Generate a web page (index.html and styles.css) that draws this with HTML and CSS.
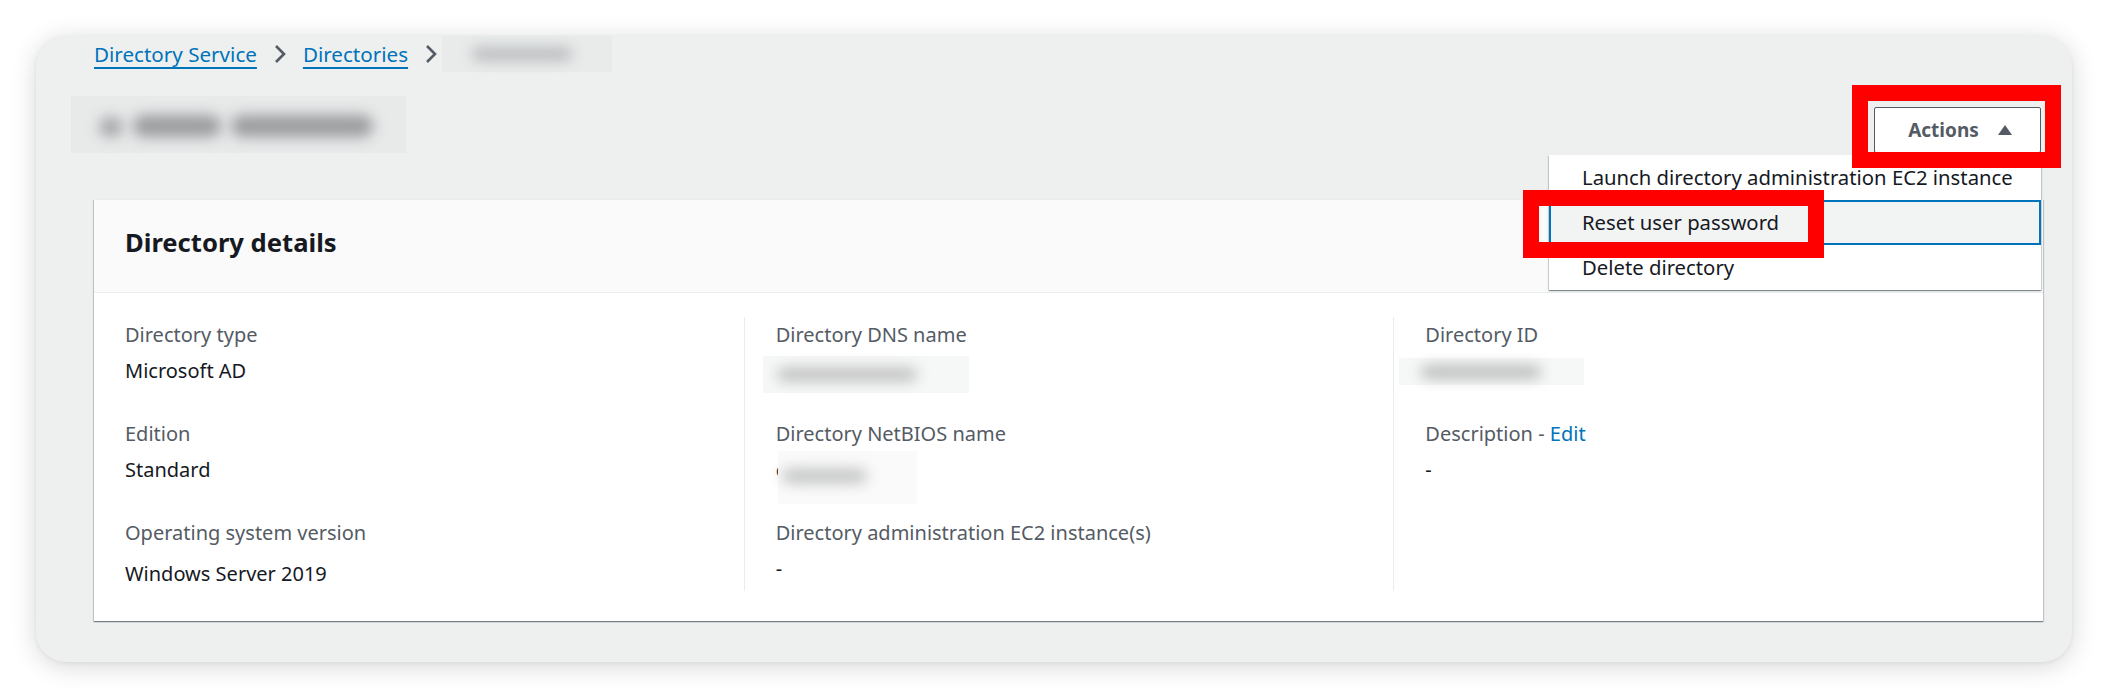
FILE: index.html
```html
<!DOCTYPE html>
<html lang="en">
<head>
<meta charset="utf-8">
<title>Directory details</title>
<link rel="stylesheet" href="styles.css">
</head>
<body>
<div class="panel">
  <nav class="breadcrumb">
    <a class="crumb-link" href="#">Directory Service</a>
    <svg class="chev" width="14" height="22" viewBox="0 0 14 22"><polyline points="3,3 11,11 3,19" fill="none" stroke="#545b64" stroke-width="2.6" stroke-linejoin="miter"/></svg>
    <a class="crumb-link" href="#">Directories</a>
    <svg class="chev" width="14" height="22" viewBox="0 0 14 22"><polyline points="3,3 11,11 3,19" fill="none" stroke="#545b64" stroke-width="2.6" stroke-linejoin="miter"/></svg>
    <span class="blur blur-crumb"><span class="ink ink-crumb"></span></span>
  </nav>

  <div class="page-head">
    <span class="blur blur-title"><span class="ink ink-title-a"></span><span class="ink ink-title-b"></span><span class="ink ink-title-c"></span></span>
    <div class="actions">
      <button class="btn" type="button">Actions <svg class="caret" width="16" height="12" viewBox="0 0 16 12"><polygon points="8,1 15,11 1,11" fill="#545b64"/></svg></button>
      <span class="annot annot-actions"></span>
      <ul class="menu">
        <li class="menu-item">Launch directory administration EC2 instance</li>
        <li class="menu-item is-hl">Reset user password<span class="annot annot-reset"></span></li>
        <li class="menu-item">Delete directory</li>
      </ul>
    </div>
  </div>

  <section class="card">
    <header class="card-head"><h2 class="card-title">Directory details</h2></header>
    <div class="card-body">
      <div class="col">
        <div class="kv"><div class="label">Directory type</div><div class="value">Microsoft AD</div></div>
        <div class="kv"><div class="label">Edition</div><div class="value">Standard</div></div>
        <div class="kv"><div class="label">Operating system version</div><div class="value value-os">Windows Server 2019</div></div>
      </div>
      <div class="col col-sep">
        <div class="kv"><div class="label">Directory DNS name</div><div class="value"><span class="blur blur-dns"><span class="ink ink-dns"></span></span></div></div>
        <div class="kv"><div class="label">Directory NetBIOS name</div><div class="value value-netbios">c<span class="blur blur-nb"><span class="ink ink-nb"></span></span></div></div>
        <div class="kv"><div class="label">Directory administration EC2 instance(s)</div><div class="value">-</div></div>
      </div>
      <div class="col col-sep">
        <div class="kv"><div class="label">Directory ID</div><div class="value"><span class="blur blur-id"><span class="ink ink-id"></span></span></div></div>
        <div class="kv"><div class="label">Description - <a class="edit" href="#">Edit</a></div><div class="value">-</div></div>
      </div>
    </div>
  </section>
</div>
</body>
</html>
```

FILE: styles.css
```css
* { box-sizing: border-box; }

html, body {
  margin: 0;
  padding: 0;
  background: #ffffff;
}

body {
  font-family: "Noto Sans", "Liberation Sans", sans-serif;
  color: #16191f;
  font-size: 20px;
  width: 2110px;
  height: 698px;
  overflow: hidden;
}

.panel {
  margin: 36px 0 0 36px;
  width: 2036px;
  height: 626px;
  background: #eef0ef;
  border-radius: 30px;
  box-shadow: 0 4px 26px rgba(0, 0, 0, 0.16), 0 1px 4px rgba(0, 0, 0, 0.06);
  padding: 3px 29px 0 58px;
}

/* breadcrumb */
.breadcrumb {
  display: flex;
  align-items: center;
  height: 30px;
  line-height: 30px;
  font-size: 20.6px;
}

.crumb-link {
  color: #0073bb;
  text-decoration: underline;
  text-underline-offset: 5px;
  text-decoration-thickness: 2px;
}

.chev {
  margin: 0 16px 0 16px;
  display: block;
}

.blur {
  display: inline-block;
  position: relative;
  vertical-align: middle;
}

.ink {
  position: absolute;
  background: #9a9c9e;
  border-radius: 10px;
  filter: blur(7px);
}

.blur-crumb {
  width: 170px;
  height: 36px;
  background: #e9ebeb;
  margin-left: -12px;
}
.ink-crumb { left: 30px; top: 12px; width: 100px; height: 12px; background: #b4b6b7; }

/* page header */
.page-head {
  display: flex;
  justify-content: space-between;
  align-items: flex-end;
  margin-top: 26px;
  height: 58px;
}

.blur-title {
  width: 335px;
  height: 57px;
  background: #e8eaea;
  margin-left: -23px;
}
.ink-title-a { left: 28px; top: 21px; width: 24px; height: 20px; background: #a3a5a7; }
.ink-title-b { left: 62px; top: 19px; width: 88px; height: 22px; background: #9a9c9e; }
.ink-title-c { left: 160px; top: 19px; width: 142px; height: 22px; background: #9a9c9e; }

.actions {
  position: relative;
  margin-right: 2px;
}

.btn {
  display: flex;
  align-items: center;
  gap: 18px;
  width: 167px;
  height: 46px;
  justify-content: center;
  background: #ffffff;
  border: 1.5px solid #545b64;
  border-radius: 2px;
  font-family: inherit;
  font-size: 19px;
  font-weight: 700;
  color: #545b64;
  padding: 0 0 0 6px;
}

.caret { display: block; }

.annot {
  position: absolute;
  border: 16px solid #ff0000;
  pointer-events: none;
  z-index: 5;
}

.annot-actions {
  left: -22px;
  top: -22px;
  width: 209px;
  height: 83px;
}

.menu {
  position: absolute;
  right: 0;
  top: 48px;
  width: 492px;
  margin: 0;
  padding: 0;
  list-style: none;
  background: #ffffff;
  box-shadow: 0 1px 1px rgba(0, 28, 36, 0.3), 1px 1px 1px rgba(0, 28, 36, 0.15), -1px 1px 1px rgba(0, 28, 36, 0.15);
  z-index: 4;
}

.menu-item {
  position: relative;
  height: 45px;
  line-height: 43px;
  padding-left: 32px;
  font-size: 20.3px;
  color: #16191f;
  white-space: nowrap;
  border: 1px solid transparent;
}

.menu-item.is-hl {
  background: #f2f3f3;
  border: 2px solid #0073bb;
  line-height: 41px;
  padding-left: 31px;
}

.annot-reset {
  left: -28px;
  top: -12px;
  width: 301px;
  height: 68px;
}

/* card */
.card {
  margin-top: 46px;
  width: 1949px;
  background: #ffffff;
  border-top: 1px solid #eaeded;
  box-shadow: 0 1px 1px 0 rgba(0, 28, 36, 0.35), 1px 1px 1px 0 rgba(0, 28, 36, 0.15), -1px 1px 1px 0 rgba(0, 28, 36, 0.15);
}

.card-head {
  height: 93px;
  background: #fafafa;
  border-bottom: 1px solid #eaeded;
  display: flex;
  align-items: center;
  padding: 0 0 8px 31px;
}

.card-title {
  margin: 0;
  font-size: 25.6px;
  font-weight: 700;
  color: #16191f;
}

.card-body {
  display: grid;
  grid-template-columns: repeat(3, 1fr);
  padding: 24px 0 30px;
}

.col {
  padding: 0 0 4px 31px;
  display: flex;
  flex-direction: column;
  gap: 27px;
}

.col-sep {
  border-left: 1px solid #eaeded;
}

.kv { display: flex; flex-direction: column; }

.label {
  line-height: 36px;
  height: 36px;
  color: #545b64;
}

.value {
  line-height: 36px;
  height: 36px;
  color: #16191f;
  display: flex;
  align-items: center;
}

.value-os { padding-top: 9px; }

.edit {
  color: #0073bb;
  text-decoration: none;
}

.blur-dns {
  width: 206px;
  height: 37px;
  background: #f6f7f7;
  margin-left: -13px;
  margin-top: 6px;
}
.ink-dns { left: 14px; top: 12px; width: 140px; height: 13px; background: #bcbdbe; }

.blur-nb {
  width: 139px;
  height: 53px;
  background: #fafafa;
  margin-left: -7px;
  margin-top: 14px;
}
.ink-nb { left: 4px; top: 18px; width: 85px; height: 14px; background: #c0c1c2; }

.blur-id {
  width: 185px;
  height: 27px;
  background: #f6f7f7;
  margin-left: -26px;
  margin-top: 0;
}
.ink-id { left: 22px; top: 8px; width: 120px; height: 12px; background: #b4b5b6; }
```
